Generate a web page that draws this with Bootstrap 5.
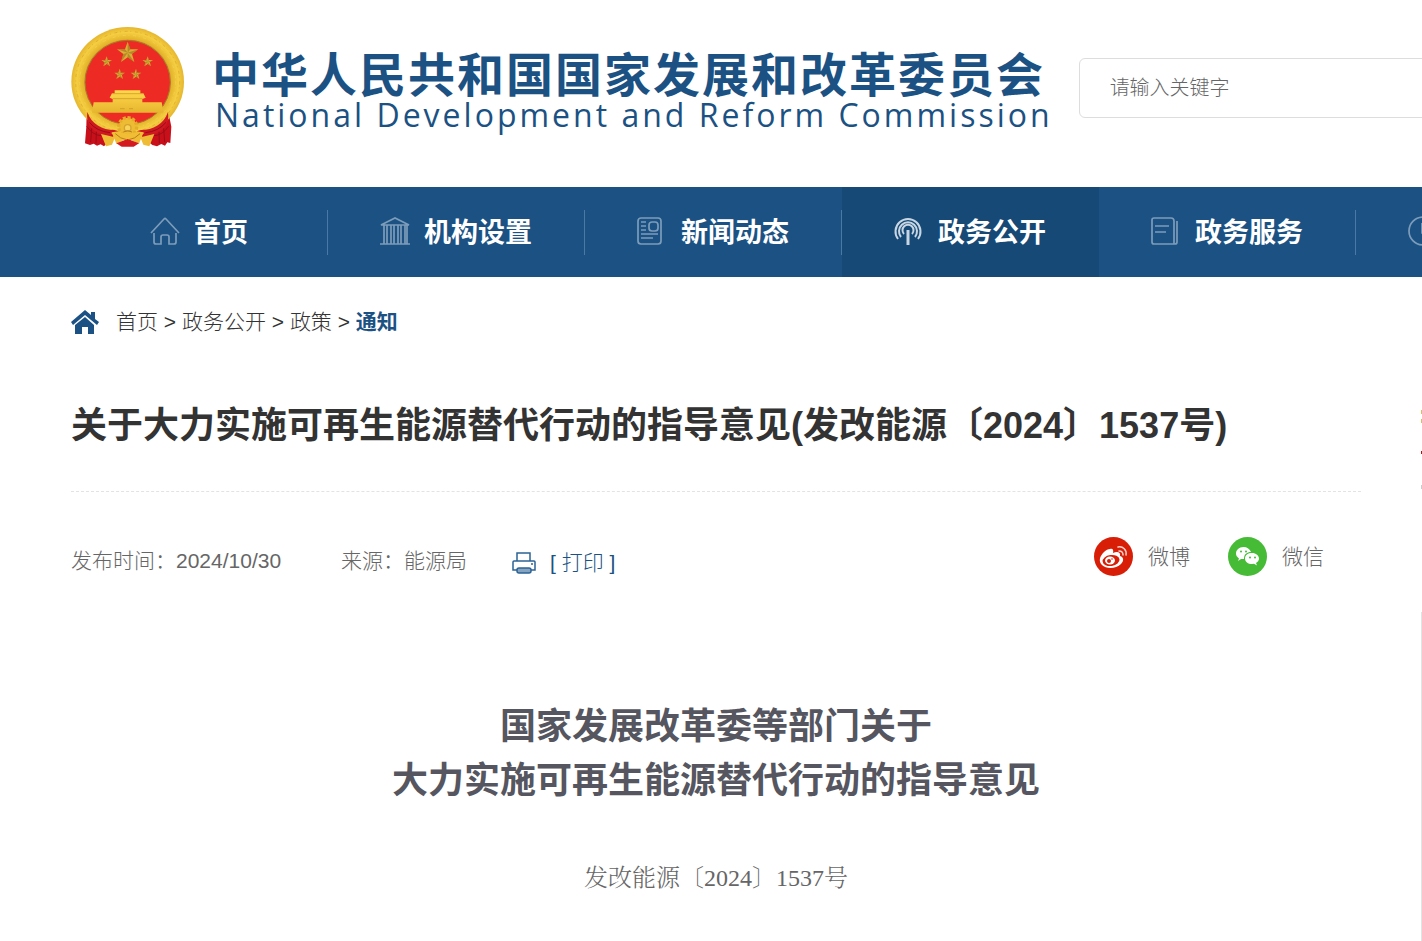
<!DOCTYPE html>
<html lang="zh-CN">
<head>
<meta charset="utf-8">
<meta name="viewport" content="width=device-width, initial-scale=1">
<title>关于大力实施可再生能源替代行动的指导意见</title>
<link href="https://cdn.jsdelivr.net/npm/bootstrap@5.3.0/dist/css/bootstrap.min.css" rel="stylesheet">
<style>
  :root { --ndrc: #1b5283; --gutter: 71px; }
  body { font-family: "Liberation Sans", "Noto Sans CJK SC", sans-serif; font-size: 21px; line-height: 32px; color: #333; font-weight: 300; background: #fff; overflow-x: hidden; }
  a { text-decoration: none; color: inherit; }
  .site-head { padding: 27px 0 39px var(--gutter); overflow: hidden; }
  .emblem { width: 113px; height: 121px; flex: none; }
  .brand { color: var(--ndrc); white-space: nowrap; margin: 22px 0 0 28px; flex: 0 0 840px; }
  .brand-cn { font: 700 47px/46px "Noto Sans CJK SC", sans-serif; letter-spacing: 2px; }
  .brand-en { font: 400 32px/40px "Open Sans", sans-serif; letter-spacing: 3px; padding-left: 3px; }
  .search { flex: 1 0 400px; margin-left: 26px; margin-top: 31px; }
  .search .form-control { height: 60px; border: 1px solid #ddd; border-radius: 6px; padding: 0 30px; font-size: 20px; font-weight: 300; color: #666; }
  .search .form-control::placeholder { color: #666; opacity: 1; }
  .main-nav { background: var(--ndrc); padding-left: var(--gutter); overflow: hidden; }
  .main-nav .nav-link { width: 257px; height: 90px; gap: 14px; padding: 0 1px 2px 0; color: #fff; font: 700 27px/40px "Noto Sans CJK SC", sans-serif; }
  .main-nav .nav-item:not(.on)::after { content: ""; position: absolute; right: 0; top: 23px; width: 1px; height: 45px; background: #4b79a3; }
  .main-nav .nav-item { position: relative; flex: none; }
  .main-nav .on { background: #164975; }
  .main-nav svg { width: 30px; height: 30px; fill: none; stroke: #7d9cba; stroke-width: 1.7; flex: none; }
  .main-nav .on svg { stroke: #c8d6e4; stroke-width: 2; }
  .main-nav .label-space { width: 108px; }
  .page-body { padding-left: var(--gutter); }
  .crumbs { padding-top: 29px; gap: 17px; }
  .crumbs strong { color: var(--ndrc); font-weight: 700; }
  .doc-title { font-size: 36px; line-height: 54px; font-weight: 700; margin: 61px 0 0; padding-bottom: 38px; border-bottom: 1px dashed #e3e3e3; }
  .meta { color: #666; padding-top: 45px; }
  .meta-left { gap: 60px; padding-top: 8px; }
  .print { border: 0; background: none; padding: 0; color: var(--ndrc); font-weight: 300; gap: 14px; margin-left: -15px; margin-top: 2px; }
  .share { gap: 38px; padding-right: 37px; }
  .share a { gap: 15px; }
  .share svg { width: 39px; height: 39px; }
  .doc-head { font-size: 36px; line-height: 54px; font-weight: 700; color: #555660; margin: 121px 0 0; }
  .doc-no { font: 300 24px/36px "Liberation Serif", "Noto Serif CJK SC", "Noto Sans CJK SC", serif; color: #666; margin: 52px 0 45px; }
  .side { flex: 0 0 1px; margin-left: 60px; padding-top: 132px; }
  .side-box { border-left: 1px solid #e3e3e3; margin-top: 123px; }
</style>
</head>
<body>
<header class="site-head d-flex align-items-start">
  <svg class="emblem" viewBox="33 36 339 363" role="img" aria-label="国徽">
    <defs>
      <radialGradient id="gold"><stop offset=".72" stop-color="#ad8422"/><stop offset=".78" stop-color="#e4b42b"/><stop offset=".9" stop-color="#f5ce42"/><stop offset="1" stop-color="#e5b62d"/></radialGradient>
      <linearGradient id="roof" x2="0" y2="1"><stop stop-color="#ffd84c"/><stop offset="1" stop-color="#e7b52f"/></linearGradient>
      <g id="star"><path fill="#dcae35" d="M0-33 8-10 32-10 13 4 20 28 0 14-20 28-13 4-32-10-8-10z"/><path fill="#8b651b" d="M0-33V0L8-10zM32-10 0 0 13 4zM20 28 0 0V14zM-20 28 0 0-13 4zM-32-10 0 0-8-10z" opacity=".5"/></g>
    </defs>
    <path fill="#c9101a" d="M80 290 105 335 190 340 215 340 300 335 325 290 334 335 331 384 322 382 315 392 304 387 291 394 277 390 240 360 165 360 132 394 122 388 111 392 101 386 90 390 75 385 79 335z"/>
    <ellipse cx="203" cy="200" rx="169" ry="164" fill="url(#gold)"/>
    <g fill="none" stroke="#c98f1e" stroke-width="3" stroke-dasharray="9 8 3 11" opacity=".4"><ellipse cx="203" cy="200" rx="156" ry="151"/><ellipse cx="203" cy="200" rx="144" ry="139" stroke="#ffe06a"/></g>
    <ellipse cx="203" cy="202" rx="128" ry="126" fill="#ee2a24" stroke="#a8792a" stroke-width="3"/>
    <use href="#star" x="203" y="113"/>
    <use href="#star" transform="translate(140 140) scale(.5)"/><use href="#star" transform="translate(263 140) scale(.5)"/>
    <use href="#star" transform="translate(179 178) scale(.5)"/><use href="#star" transform="translate(228 178) scale(.5)"/>
    <path fill="url(#roof)" d="M164 226H241V235H250L257 248 247 252V262H305L311 293H96L101 262H158V252L149 248 156 235H164z"/>
    <path stroke="#c59322" stroke-width="2" fill="none" d="M157 236H249M158 251H247M180 281h14M207 281h12"/>
    <path fill="#cf1820" d="M82 291C94 327 127 345 163 345L176 349 155 352C158 372 141 366 119 356 91 345 78 325 82 291zM324 291C312 327 279 345 243 345L230 349 251 352C248 372 265 366 287 356 315 345 328 325 324 291z"/>
    <path fill="none" stroke="#970d17" stroke-width="3" d="M88 322Q110 349 150 353M80 334Q100 362 125 362M95 340 92 382M109 350 108 385M318 322Q296 349 256 353M326 334Q306 362 281 362M311 340 314 382M297 350 298 385"/>
    <path fill="#efbd35" d="M123 357 165 367 156 389 138 394zM283 357 241 367 250 389 268 394z"/>
    <circle cx="203" cy="335" r="27" fill="#edbc34" stroke="#e4ad29" stroke-width="10" stroke-dasharray="9 5"/>
    <circle cx="203" cy="339" r="10" fill="#f8d35a" stroke="#d5a32f" stroke-width="4"/>
    <path fill="#f1bd34" d="M156 354Q180 348 203 358 226 348 250 354L237 386 214 375 203 384 192 375 169 386z"/>
    <path fill="#d21a20" d="M169 385 203 372 237 385 221 395H185z"/><path fill="none" stroke="#b87c20" stroke-width="3" d="M166 356Q181 372 200 374M240 356Q225 372 206 374M190 351Q203 343 216 351"/>
  </svg>
  <div class="brand">
    <div class="brand-cn">中华人民共和国国家发展和改革委员会</div>
    <div class="brand-en">National Development and Reform Commission</div>
  </div>
  <form class="search" role="search"><input class="form-control shadow-none" type="search" aria-label="请输入关键字" placeholder="请输入关键字"></form>
</header>

<nav class="main-nav" aria-label="主导航">
  <ul class="nav flex-nowrap">
    <li class="nav-item"><a class="nav-link d-flex align-items-center justify-content-center" href="#"><svg viewBox="0 0 30 30"><path d="M1 17 14 3q1-1 2 0L29 17M4 17V26q0 2 2 2h5V21q0-2 2-2h4q2 0 2 2v7h5q2 0 2-2V17"/></svg>首页</a></li>
    <li class="nav-item"><a class="nav-link d-flex align-items-center justify-content-center" href="#"><svg viewBox="0 0 30 30"><path d="M0 28H30M1 9 15 2 29 9zM4 9v19M7 9v19M11 9v19M14 9v19M18 9v19M21 9v19M25 9v19M27 9v19"/></svg>机构设置</a></li>
    <li class="nav-item"><a class="nav-link d-flex align-items-center justify-content-center" href="#"><svg viewBox="3 0 30 30"><rect x="4" y="2" width="23" height="26" rx="3"/><rect x="15" y="6" width="9" height="9" rx="3"/><path d="M7 6h5M7 10h5M7 14h5M7 18h17M7 22h12"/></svg>新闻动态</a></li>
    <li class="nav-item on"><a class="nav-link d-flex align-items-center justify-content-center" href="#" aria-current="page"><svg viewBox="0 0 30 30"><path d="M4 23A12.500 12.500 0 1 1 24 23M7 21A9 9 0 1 1 21 21M10 18A5.500 5.500 0 1 1 18 18"/><path stroke-width="3" d="M14 14V29"/></svg>政务公开</a></li>
    <li class="nav-item"><a class="nav-link d-flex align-items-center justify-content-center" href="#"><svg viewBox="1 0 30 30"><path d="M4 2H21q3 0 3 3V28H4q-2 0-2-2V4q0-2 2-2zM24 28h1q2 0 2-2V5M5 10H19M5 16H16"/></svg>政务服务</a></li>
    <li class="nav-item"><a class="nav-link d-flex align-items-center justify-content-center" href="#" aria-label="更多"><svg viewBox="0 0 30 30"><circle cx="15" cy="15" r="14"/><path d="M14 7v10h8"/></svg><span class="label-space"></span></a></li>
  </ul>
</nav>

<div class="page-body d-flex">
  <main class="flex-grow-1">
    <nav class="crumbs d-flex align-items-center" aria-label="当前位置">
      <svg width="28" height="24" viewBox="0 0 28 24" fill="#1b5283" aria-hidden="true"><path d="M0 12 14 0l6 5V2h4v7l4 3-2 3L14 5 2 15z"/><path d="M4 15 14 7l9 8v9h-6v-7h-6v7H4z"/></svg>
      <div><a href="#">首页</a> &gt; <a href="#">政务公开</a> &gt; <a href="#">政策</a> &gt; <a href="#"><strong>通知</strong></a></div>
    </nav>
    <h1 class="doc-title">关于大力实施可再生能源替代行动的指导意见(发改能源〔2024〕1537号)</h1>
    <div class="meta d-flex justify-content-between align-items-start">
      <div class="meta-left d-flex">
        <span>发布时间：2024/10/30</span>
        <span>来源：能源局</span>
        <button class="print d-flex align-items-center" type="button">
          <svg width="24" height="22" viewBox="0 0 24 22" fill="none" stroke="#2c6395" stroke-width="1.500" aria-hidden="true"><path d="M5 9V1h13v8M5 18H1V10q0-1 1-1h20q1 0 1 1v8h-4"/><rect x="5" y="16" width="14" height="5" rx="2" fill="#86a4c0"/><path d="M19 12h2"/></svg>
          <span>[ 打印 ]</span>
        </button>
      </div>
      <div class="share d-flex">
        <a class="d-flex align-items-center" href="#"><svg viewBox="0 0 39 39" aria-hidden="true"><circle cx="19.500" cy="19.500" r="19.500" fill="#d81e06"/><path fill="#fff" d="M16 12c2-1 4 0 3 4 4-2 8-1 7 3 4 1 4 5 1 8-5 5-15 5-19 1C4 24 6 19 10 15c2-2 4-3 6-3z"/><ellipse cx="17" cy="23.500" rx="8.500" ry="5.500" fill="#d81e06" transform="rotate(-8 17 23)"/><ellipse cx="16" cy="23.500" rx="5" ry="4" fill="#fff"/><circle cx="15" cy="24" r="2" fill="#d81e06"/><circle cx="18" cy="22" r=".8" fill="#d81e06"/><path d="M24 10c5-1 9 3 8 8M25 14c3 0 4 1 4 4" fill="none" stroke="#fff" stroke-width="1.500" stroke-linecap="round" opacity=".8"/></svg>微博</a>
        <a class="d-flex align-items-center" href="#"><svg viewBox="0 0 39 39" aria-hidden="true"><circle cx="19.500" cy="19.500" r="19.500" fill="#46bb36"/><path fill="#fff" d="M15.500 10C11 10 8 13 8 16.500c0 2 1 3.500 3 5L10 24l3-2h3c0-5 3-7 7-7-1-3-4-5-7.500-5z"/><path fill="#fff" d="M24 16c-4 0-7 2-7 5.500S20 27 24 27l2-.3 3 1.800-1-2.500c2-1 3-3 3-4.500 0-3-3-5.500-7-5.500z"/><g fill="#46bb36"><circle cx="13" cy="14.500" r="1"/><circle cx="18" cy="14.500" r="1"/><circle cx="22" cy="20.500" r="1"/><circle cx="27" cy="20.500" r="1"/></g></svg>微信</a>
      </div>
    </div>
    <article class="text-center">
      <h2 class="doc-head">国家发展改革委等部门关于<br>大力实施可再生能源替代行动的指导意见</h2>
      <p class="doc-no">发改能源〔2024〕1537号</p>
    </article>
  </main>
  <aside class="side d-flex flex-column" aria-label="相关信息">
    <svg class="d-block" width="1" height="80" aria-hidden="true"><path fill="#e2b96c" d="M0 1h1v4H0zM0 10h1v4H0z"/><path fill="#b3101a" d="M0 42h1v3H0z"/><path fill="#ccc" d="M0 76h1v4H0z"/></svg>
    <div class="side-box flex-grow-1"></div>
  </aside>
</div>
<script src="https://cdn.jsdelivr.net/npm/bootstrap@5.3.0/dist/js/bootstrap.bundle.min.js"></script>
</body>
</html>
